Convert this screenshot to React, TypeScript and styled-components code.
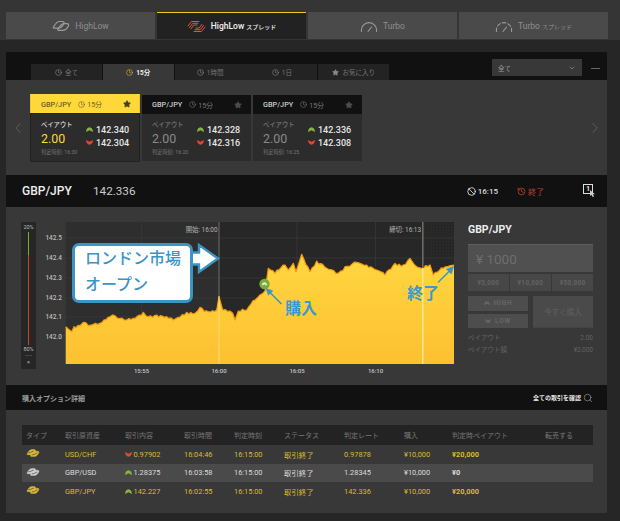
import React from "react";
import styled, { createGlobalStyle } from "styled-components";
import { Ban, ChevronDown, ChevronLeft, ChevronRight, Clock, History, Search, Star } from "lucide-react";

const Global = createGlobalStyle`
  html, body { margin: 0; padding: 0; background: #262626; }
  * { box-sizing: border-box; }
  body { font-family: Roboto, "Noto Sans CJK JP", sans-serif; }
`;

const Page = styled.div`
  width: 620px; height: 521px; overflow: hidden; background: #262626; color: #ddd;
`;
const TabBar = styled.div`
  height: 40px; padding: 12px 0 0 6px; background: #353535; display: flex; gap: 2px;
`;
const TopTab = styled.div<{ $active?: boolean }>`
  width: 149px; height: 27px; display: flex; align-items: center; justify-content: center; gap: 5px;
  background: ${p => (p.$active ? "#222" : "#4a4a4a")};
  border-top: ${p => (p.$active ? "1.5px solid #f5c61f" : "none")};
  color: ${p => (p.$active ? "#f2f2f2" : "#8f8f8f")};
  font-size: 8.5px; font-weight: ${p => (p.$active ? 500 : 400)};
  small { font-size: 6px; margin-left: 2px; }
`;
const Main = styled.div`
  margin: 12px 13px 0 6px; width: 601px;
`;
const FilterBar = styled.div`
  height: 28px; background: #111; display: flex; align-items: flex-end; padding-left: 25px; position: relative;
`;
const SubTab = styled.div<{ $active?: boolean }>`
  width: 71px; height: 16px; margin-right: 0.8px; display: flex; align-items: center; justify-content: center; gap: 3px;
  background: ${p => (p.$active ? "#383838" : "#232323")};
  color: ${p => (p.$active ? "#eee" : "#777")};
  font-size: 6.5px; font-weight: ${p => (p.$active ? 700 : 400)};
  svg { color: ${p => (p.$active ? "#e4b92a" : "#888")}; }
`;
const FilterRight = styled.div`
  margin-left: auto; align-self: flex-start; margin-top: 7px; display: flex; align-items: center;
`;
const Select = styled.div`
  width: 90px; height: 17px; background: #383838; color: #999; font-size: 6.5px; padding: 0 6px;
  display: flex; align-items: center; justify-content: space-between;
`;
const Dash = styled.div`
  width: 9px; height: 1px; background: #666; margin: 2px 7px 0 9px;
`;
const CardsZone = styled.div`
  height: 95px; background: #383838; padding-top: 14px; display: flex; align-items: flex-start; color: #666;
`;
const Chev = styled.div<{ $right?: boolean }>`
  width: 24px; height: 68px; display: flex; align-items: center; justify-content: center;
  margin-left: ${p => (p.$right ? "auto" : "0")};
  color: #6a6a6a;
`;
const Cards = styled.div`
  display: flex; gap: 2px; align-items: center;
`;
const Card = styled.div<{ $active?: boolean }>`
  width: ${p => (p.$active ? "110px" : "109px")};
  height: ${p => (p.$active ? "68px" : "66px")};
  background: ${p => (p.$active ? "#f2c230" : "#111")};
  padding: ${p => (p.$active ? "0 1px 1px" : "0")};
  display: flex; flex-direction: column;
`;
const CardHead = styled.div<{ $active?: boolean }>`
  height: ${p => (p.$active ? "20px" : "19px")}; display: flex; align-items: center;
  padding: 0 ${p => (p.$active ? "8px" : "9px")} 0 10px;
  background: ${p => (p.$active ? "#ffd83a" : "#111")};
  color: ${p => (p.$active ? "#6d6127" : "#ccc")};
  font-size: 7.3px; font-weight: 500;
  span { display: flex; align-items: center; gap: 2px; margin-left: 7px; font-weight: 400; color: ${p => (p.$active ? "#6d6127" : "#777")}; font-size: 7px; }
  > svg { margin-left: auto; color: ${p => (p.$active ? "#44402a" : "#4d4d4d")}; fill: currentColor; }
`;
const CardBody = styled.div<{ $active?: boolean }>`
  flex: 1; background: #2c2c2c; display: flex; padding: 7px 0 0 10px; position: relative;
  outline: ${p => (p.$active ? "1px solid #222" : "none")};
`;
const PayCol = styled.div`
  width: 45px;
`;
const PayLabel = styled.div<{ $active?: boolean }>`
  font-size: 6.3px; line-height: 9px; font-weight: 500; color: ${p => (p.$active ? "#ddd" : "#777")};
`;
const PayValue = styled.div<{ $active?: boolean }>`
  font-size: 12.4px; line-height: 15px; margin-top: 1px; color: ${p => (p.$active ? "#ffd83a" : "#8a8a8a")};
`;
const Judge = styled.div`
  font-size: 5.2px; line-height: 7px; margin-top: 3px; color: #777; white-space: nowrap;
`;
const PriceCol = styled.div`
  display: flex; flex-direction: column; gap: 3px; margin-top: 4px;
`;
const Price = styled.div`
  display: flex; align-items: center; gap: 3px; font-size: 9px; line-height: 10px; font-weight: 500; color: #e6e6e6;
`;
const InfoBar = styled.div`
  height: 32px; background: #111; display: flex; align-items: center; padding-left: 16px; color: #eee;
`;
const PairTitle = styled.div`
  font-size: 12px; font-weight: 500; width: 71px;
`;
const PairRate = styled.div`
  font-size: 11.7px; color: #ccc;
`;
const Closing = styled.div`
  margin-left: auto; display: flex; align-items: center; gap: 2px; font-size: 8px; font-weight: 500; color: #ddd;
`;
const Ended = styled.div`
  margin-left: 19px; width: 66px; display: flex; align-items: center; gap: 2px; font-size: 8px; color: #b8432c;
`;
const CountBox = styled.div`
  width: 22px; margin-right: 2px; position: relative; height: 14px;
`;
const BoxOne = styled.div`
  width: 10px; height: 10px; border: 1px solid #ddd; font-size: 6.5px; font-weight: 700; line-height: 8px; text-align: center; color: #eee;
`;
const CursorMark = styled.svg`
  position: absolute; left: 7px; top: 6px;
`;
const ChartZone = styled.div`
  height: 178px; background: #383838; padding: 15px 0 0 15px; display: flex; align-items: flex-start;
`;
const Gauge = styled.div`
  width: 15px; height: 147px; background: #262626; display: flex; flex-direction: column; align-items: center;
  font-size: 5.5px; color: #bbb; padding-top: 2px;
`;
const GaugeBar = styled.div`
  width: 1.4px; height: 113px; margin: 2px 0 1px;
  background: linear-gradient(#7cab3a 0 20%, #c5462a 20% 100%);
`;
const GaugeDash = styled.div`
  width: 7px; height: 1px; background: #444; margin: 3px 0;
`;
const ChartArea = styled.div`
  position: relative; width: 424px; height: 154px;
`;
const ChartSvg = styled.svg`
  display: block;
`;
const Callout = styled.div`
  position: absolute; left: 36px; top: 21px; width: 121px; height: 60px;
  background: #fff; border: 3px solid #3a94c4; border-radius: 7px;
  padding: 0 0 0 10px; color: #3a94c4; font-size: 16px; line-height: 26px; font-weight: 500; white-space: nowrap;
`;
const Note = styled.div<{ $x: number; $y: number }>`
  position: absolute; left: ${p => p.$x}px; top: ${p => p.$y}px;
  color: #3a9ad0; font-size: 16px; line-height: 18px; font-weight: 700; white-space: nowrap;
`;
const TradePanel = styled.div`
  width: 125px; margin-left: 8px; display: flex; flex-direction: column;
`;
const TradeTitle = styled.div`
  font-size: 10.5px; font-weight: 700; color: #eee; line-height: 12px; margin: 2px 0 8px;
`;
const Amount = styled.div`
  height: 28px; background: #505050; border-top: 1px solid #5e5e5e; color: #6e6e6e; font-size: 13.5px; padding-left: 8px;
  display: flex; align-items: center;
`;
const Quick = styled.div`
  display: grid; grid-template-columns: repeat(3, 1fr); gap: 1.5px; margin-top: 2px;
`;
const QuickBtn = styled.div`
  height: 17px; background: #474747; color: #636363; font-size: 6.5px; font-weight: 700; letter-spacing: .3px;
  display: flex; align-items: center; justify-content: center;
`;
const TradeRow = styled.div`
  display: flex; gap: 5px; margin-top: 5px;
`;
const DirCol = styled.div`
  width: 60px; display: flex; flex-direction: column; gap: 3px;
`;
const DirBtn = styled.div`
  height: 14.5px; background: #4d4d4d; color: #666; font-size: 6.5px; font-weight: 700; letter-spacing: .8px;
  display: flex; align-items: center; justify-content: center; gap: 4px;
`;
const BuyBtn = styled.div`
  width: 60px; height: 32px; background: #4a4a4a; border-bottom: 1px solid #444; color: #5c5c5c; font-size: 7.5px; font-weight: 500;
  display: flex; align-items: center; justify-content: center;
`;
const InfoLines = styled.div`
  margin-top: 4px;
`;
const InfoLine = styled.div`
  display: flex; justify-content: space-between; color: #636363; font-size: 6.5px; line-height: 12px;
`;
const SectionBar = styled.div`
  height: 25px; margin-top: 0; background: #111; display: flex; align-items: center; justify-content: space-between;
  padding: 0 14px 0 16px; font-size: 7px; font-weight: 700; color: #999;
`;
const AllLink = styled.div`
  display: flex; align-items: center; gap: 2px; color: #e8e8e8; font-size: 6px; font-weight: 700;
  svg { color: #aaa; }
`;
const TableZone = styled.div`
  height: 103px; background: #383838; padding: 15px 14px 0 16px;
`;
const columns = "43px 60px 59px 50px 50px 60px 60px 48px 93px 48px";
const HeadRow = styled.div`
  height: 20px; background: #232323; display: grid; grid-template-columns: ${columns}; align-items: center;
  font-size: 7px; color: #777; padding-left: 0;
  div:first-child { padding-left: 4px; }
`;
const Row = styled.div<{ $tone: "gold" | "white" }>`
  height: 18.5px; display: grid; grid-template-columns: ${columns}; align-items: center; font-size: 7.4px;
  color: ${p => (p.$tone === "gold" ? "#d9bb35" : "#dcdcdc")};
  background: ${p => (p.$tone === "gold" ? "transparent" : "#4a4a4a")};
`;
const IconCell = styled.div`
  padding-left: 4px; display: flex; align-items: center; height: 100%; padding-bottom: 2px;
`;
const RateCell = styled.div`
  display: flex; align-items: center; gap: 1.5px;
`;
const Payout = styled.div`
  font-weight: 700;
`;
const Empty = styled.div``;

const LINK = "M1.5 7C3 4.5 4.5 1.5 7.5 1.5H10.5C12.5 1.5 12.5 3 11.5 4.5 10 7 8.5 8.2 6.5 8.2H3C1.5 8.2 .9 8 1.5 7Z";
const Wave = ({ color, w = 18, h = 12, filled }: { color: string; w?: number; h?: number; filled?: boolean }) => (
  <svg width={w} height={h} viewBox="0 0 18 12" fill={filled ? color : "none"} stroke={color} strokeWidth={filled ? 0.6 : 1.2} strokeLinejoin="round">
    <path d={LINK} />
    <path d={LINK} transform="translate(4.5 2.2)" />
    {filled && <path d="M3 5.8C5 5.5 8 4.6 10 3.4" stroke="#3a3a3a" strokeWidth="0.8" fill="none" />}
    {filled && <path d="M7.5 8.6C9.5 8.3 12.5 7.2 14.5 6" stroke="#3a3a3a" strokeWidth="0.8" fill="none" />}
  </svg>
);
const StripeWave = () => (
  <svg width="19" height="13" viewBox="0 0 19 13" fill="none" stroke="#dd5a2a" strokeWidth="1" strokeLinecap="round" strokeLinejoin="round">
    <path d="M1 6 4.5 1.5H12" />
    <path d="M2.5 7.5 5.8 3.3H11" />
    <path d="M4 8.8 6.8 5H10" />
    <path d="M18 7 14.5 11.5H7" />
    <path d="M16.5 5.5 13.2 9.7H8" />
    <path d="M15 4.2 12.2 8H9" />
  </svg>
);
const Meter = ({ dashed }: { dashed?: boolean }) => (
  <svg width="18" height="13" viewBox="0 0 18 13" fill="none" stroke="#9a9a9a" strokeWidth="1.1" strokeLinecap="round">
    <path d="M1.5 12.5A7.6 7.6 0 1 1 16.5 12.5" strokeDasharray={dashed ? "3.5 2.2" : undefined} />
    <path d="M8 12.5 11.5 8" />
  </svg>
);
const Dir = ({ up, w = 7, color }: { up: boolean; w?: number; color?: string }) => (
  <svg width={w} height={w * 0.72} viewBox="0 0 7 5" style={{ flex: "none" }}>
    <path
      d={up ? "M0 5Q.4 .6 3.5 .3 6.6 .6 7 5L3.5 3.2Z" : "M0 0Q.4 4.4 3.5 4.7 6.6 4.4 7 0L3.5 1.8Z"}
      fill={color ?? (up ? "#86b53c" : "#e2492c")}
    />
  </svg>
);

const z3: [number, number][] = [[197,365],[205,372],[215,380],[222,365],[240,362],[250,352],[265,362],[300,355],[330,335],[345,332],[380,345],[400,340],[430,322],[445,335],[470,330],[500,335],[520,345],[560,322],[585,325],[600,307],[625,320],[650,315],[657,275],[668,315],[690,318]];
const z4: [number, number][] = [[8,325],[15,345],[25,318],[50,315],[75,285],[90,270],[105,258],[115,190],[135,205],[165,180],[175,195],[190,175],[198,200],[215,148],[240,200],[260,168],[290,190],[325,205],[345,185],[380,172],[410,180],[440,195],[465,210],[495,175],[520,180],[540,160],[560,185],[575,190],[600,180],[610,210],[640,190],[672,180]];
const anchors: [number, number][] = [
  ...z3.map(([x, y]): [number, number] => [x / 3, 205 + y / 3]),
  ...z4.map(([x, y]): [number, number] => [230 + x / 3, 205 + y / 3]),
];
const linePts: string[] = [];
anchors.forEach(([x, y], i) => {
  linePts.push(`${x.toFixed(1)},${y.toFixed(1)}`);
  const next = anchors[i + 1];
  if (!next) return;
  const n = Math.floor((next[0] - x) / 2);
  for (let k = 1; k < n; k++) {
    const t = k / n;
    const px = x + (next[0] - x) * t;
    const py = y + (next[1] - y) * t + Math.sin(px * 7.3) * 0.9 + Math.sin(px * 2.9) * 0.9;
    linePts.push(`${px.toFixed(1)},${py.toFixed(1)}`);
  }
});
const line = linePts.join(" ");
const area = `65.7,364 ${line} 454,364`;

const yTicks: [string, number][] = [["142.5",238],["142.4",258],["142.3",278],["142.2",298],["142.1",317],["142.0",337]];
const xTicks: [string, number][] = [["15:55",141.5],["16:00",219],["16:05",297],["16:10",375.5]];

const Chart = () => (
  <ChartSvg width="424" height="154" viewBox="36 222 424 154">
    <defs>
      <linearGradient id="fillY" x1="0" y1="0" x2="0" y2="1">
        <stop offset="0" stopColor="#ffd740" />
        <stop offset="1" stopColor="#fdc030" />
      </linearGradient>
      <pattern id="hatch" width="3" height="3" patternUnits="userSpaceOnUse">
        <rect width="3" height="3" fill="#2a2a2a" />
        <rect width="1" height="1" fill="#1d1d1d" />
        <rect x="1.5" y="1.5" width="1" height="1" fill="#1d1d1d" />
      </pattern>
    </defs>
    <rect x="65.7" y="222" width="153.3" height="142" fill="#2e2e2e" />
    <rect x="219" y="222" width="204" height="142" fill="#272727" />
    <rect x="423" y="222" width="31" height="142" fill="url(#hatch)" />
    {yTicks.map(([l, y]) => (
      <g key={l}>
        <line x1="65.7" x2="454" y1={y} y2={y} stroke="#3a3a3a" strokeWidth="0.7" />
        <text x="62" y={y + 2.2} textAnchor="end" fontSize="6.5" fontWeight="500" fill="#bbb">{l}</text>
      </g>
    ))}
    {xTicks.map(([l, x]) => (
      <g key={l}>
        <line x1={x} x2={x} y1="222" y2="364" stroke="#3a3a3a" strokeWidth="0.7" />
        <text x={x} y="373.3" textAnchor="middle" fontSize="6" fontWeight="500" fill="#c4c4c4">{l}</text>
      </g>
    ))}
    <polygon points={area} fill="url(#fillY)" />
    <polyline points={line} fill="none" stroke="#f59a0c" strokeWidth="1.2" strokeLinejoin="round" />
    <line x1="219" x2="219" y1="222" y2="296" stroke="#777" strokeWidth="0.8" />
    <line x1="219" x2="219" y1="296" y2="364" stroke="#ffe58a" strokeWidth="0.8" />
    <line x1="422.8" x2="422.8" y1="222" y2="268" stroke="#6a6a6a" strokeWidth="1.6" />
    <line x1="422.8" x2="422.8" y1="268" y2="364" stroke="#ffe58a" strokeWidth="1.6" />
    <text x="217.5" y="232" textAnchor="end" fontSize="6.4" fill="#b4b4b4">開始: 16:00</text>
    <text x="421" y="232" textAnchor="end" fontSize="6.4" fill="#b4b4b4">締切: 16:13</text>
    <path d="M188 252.5H199V245L218 258.5 199 272V264.5H188Z" fill="#fff" stroke="#3a94c4" strokeWidth="2.4" strokeLinejoin="miter" />
    <circle cx="264.5" cy="284" r="5.2" fill="#7cab3a" />
    <path d="M261.8 285.6Q262 282.4 264.5 282.3 267 282.4 267.2 285.6L264.5 284.5Z" fill="#e8f0d8" />
    <g stroke="#3a94c4" fill="#3a94c4" strokeWidth="1.5">
      <line x1="281.5" y1="304" x2="269" y2="291.5" />
      <path d="M266 288.5 272.8 290.8 268.4 295.2Z" strokeWidth="0.6" />
      <line x1="438" y1="282.5" x2="449.5" y2="271" />
      <path d="M453.5 266.5 451.4 274 446.4 269Z" strokeWidth="0.6" />
    </g>
  </ChartSvg>
);

const subTabs: { label: string; star?: boolean; active?: boolean }[] = [
  { label: "全て" }, { label: "15分", active: true }, { label: "1時間" }, { label: "1日" }, { label: "お気に入り", star: true },
];
const cards = [
  { active: true, hi: "142.340", lo: "142.304", t: "16:30" },
  { active: false, hi: "142.328", lo: "142.316", t: "16:20" },
  { active: false, hi: "142.336", lo: "142.308", t: "16:25" },
];
const trades = [
  { tone: "gold" as const, up: false, pair: "USD/CHF", rate: "0.97902", time: "16:04:46", end: "0.97878", pay: "¥20,000" },
  { tone: "white" as const, up: true, pair: "GBP/USD", rate: "1.28375", time: "16:03:58", end: "1.28345", pay: "¥0" },
  { tone: "gold" as const, up: true, pair: "GBP/JPY", rate: "142.227", time: "16:02:55", end: "142.336", pay: "¥20,000" },
];
const heads = ["タイプ","取引原資産","取引内容","取引時間","判定時刻","ステータス","判定レート","購入","判定時ペイアウト","転売する"];

export default function App() {
  return (
    <Page>
      <Global />
      <TabBar>
        <TopTab><Wave color="#9a9a9a" />HighLow</TopTab>
        <TopTab $active><StripeWave /><span>HighLow<small>スプレッド</small></span></TopTab>
        <TopTab><Meter />Turbo</TopTab>
        <TopTab><Meter dashed /><span>Turbo<small>スプレッド</small></span></TopTab>
      </TabBar>
      <Main>
        <FilterBar>
          {subTabs.map(s => (
            <SubTab key={s.label} $active={s.active}>
              {s.star ? <Star size={7} fill="currentColor" /> : <Clock size={7} />}
              {s.label}
            </SubTab>
          ))}
          <FilterRight>
            <Select>全て<ChevronDown size={8} /></Select>
            <Dash />
          </FilterRight>
        </FilterBar>
        <CardsZone>
          <Chev><ChevronLeft size={18} strokeWidth={1} /></Chev>
          <Cards>
            {cards.map(c => (
              <Card key={c.t} $active={c.active}>
                <CardHead $active={c.active}>
                  GBP/JPY
                  <span><Clock size={7} />15分</span>
                  <Star size={8} />
                </CardHead>
                <CardBody $active={c.active}>
                  <PayCol>
                    <PayLabel $active={c.active}>ペイアウト</PayLabel>
                    <PayValue $active={c.active}>2.00</PayValue>
                    <Judge>判定時刻: {c.t}</Judge>
                  </PayCol>
                  <PriceCol>
                    <Price><Dir up />{c.hi}</Price>
                    <Price><Dir up={false} />{c.lo}</Price>
                  </PriceCol>
                </CardBody>
              </Card>
            ))}
          </Cards>
          <Chev $right><ChevronRight size={18} strokeWidth={1} /></Chev>
        </CardsZone>
        <InfoBar>
          <PairTitle>GBP/JPY</PairTitle>
          <PairRate>142.336</PairRate>
          <Closing><Ban size={9} strokeWidth={2.4} />16:15</Closing>
          <Ended><History size={9} strokeWidth={2.2} />終了</Ended>
          <CountBox>
            <BoxOne>1</BoxOne>
            <CursorMark width="5" height="7" viewBox="0 0 5 7"><path d="M0 0V6L1.5 4.7 2.6 7 4 6.4 2.9 4.3H5Z" fill="#ccc" /></CursorMark>
          </CountBox>
        </InfoBar>
        <ChartZone>
          <Gauge>
            20%
            <GaugeBar />
            80%
            <GaugeDash />
            ×
          </Gauge>
          <ChartArea>
            <Chart />
            <Callout>ロンドン市場<br />オープン</Callout>
            <Note $x={249} $y={78}>購入</Note>
            <Note $x={371} $y={63}>終了</Note>
          </ChartArea>
          <TradePanel>
            <TradeTitle>GBP/JPY</TradeTitle>
            <Amount>¥ 1000</Amount>
            <Quick>
              <QuickBtn>¥5,000</QuickBtn>
              <QuickBtn>¥10,000</QuickBtn>
              <QuickBtn>¥50,000</QuickBtn>
            </Quick>
            <TradeRow>
              <DirCol>
                <DirBtn><Dir up w={6} color="#666" />HIGH</DirBtn>
                <DirBtn><Dir up={false} w={6} color="#666" />LOW</DirBtn>
              </DirCol>
              <BuyBtn>今すぐ購入</BuyBtn>
            </TradeRow>
            <InfoLines>
              <InfoLine><span>ペイアウト</span><span>2.00</span></InfoLine>
              <InfoLine><span>ペイアウト額</span><span>¥2,000</span></InfoLine>
            </InfoLines>
          </TradePanel>
        </ChartZone>
        <SectionBar>
          購入オプション詳細
          <AllLink>全ての取引を確認<Search size={10} strokeWidth={1.4} /></AllLink>
        </SectionBar>
        <TableZone>
          <HeadRow>{heads.map(h => <div key={h}>{h}</div>)}</HeadRow>
          {trades.map(t => (
            <Row key={t.pair} $tone={t.tone}>
              <IconCell><Wave color={t.tone === "gold" ? "#d9bb35" : "#cfcfcf"} w={14} h={10} filled /></IconCell>
              <div>{t.pair}</div>
              <RateCell><Dir up={t.up} />{t.rate}</RateCell>
              <div>{t.time}</div>
              <div>16:15:00</div>
              <div>取引終了</div>
              <div>{t.end}</div>
              <div>¥10,000</div>
              <Payout>{t.pay}</Payout>
              <Empty />
            </Row>
          ))}
        </TableZone>
      </Main>
    </Page>
  );
}
